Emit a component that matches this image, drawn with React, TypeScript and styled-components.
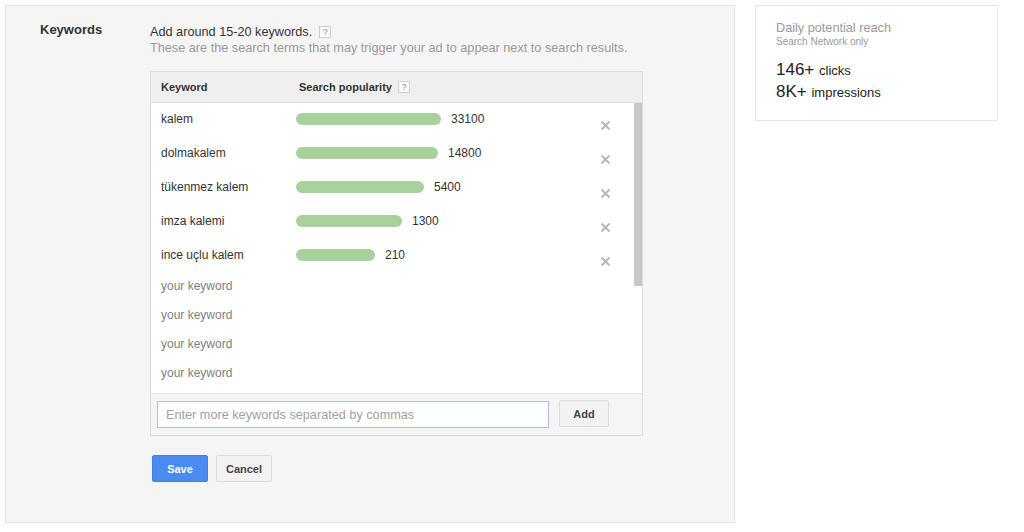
import styled, { createGlobalStyle } from 'styled-components';

const Global = createGlobalStyle`
  html, body {
    margin: 0;
    padding: 0;
    background: #fff;
    font-family: Arial, "Liberation Sans", sans-serif;
    color: #222;
  }
`;

const Page = styled.div`
  display: flex;
  align-items: flex-start;
  gap: 20px;
  padding: 5px;
`;

const Panel = styled.section`
  box-sizing: border-box;
  width: 730px;
  height: 518px;
  background: #f5f5f5;
  border: 1px solid #e3e3e3;
  display: flex;
  padding: 18px 0 0 34px;
`;

const Label = styled.div`
  width: 110px;
  flex: none;
  font-size: 13px;
  font-weight: bold;
  color: #333;
  line-height: 12px;
`;

const Content = styled.div`
  width: 493px;
`;

const Intro = styled.div`
  font-size: 12.7px;
  line-height: 16px;
  color: #333;
  display: flex;
  align-items: center;
  gap: 7px;
`;

const Sub = styled.div`
  font-size: 12.7px;
  line-height: 16px;
  color: #999;
  white-space: nowrap;
`;

const Help = styled.span`
  box-sizing: border-box;
  display: inline-flex;
  align-items: center;
  justify-content: center;
  width: 12px;
  height: 12px;
  border: 1px solid #ccc;
  background: #fff;
  color: #888;
  font-size: 9px;
  font-weight: normal;
  line-height: 1;
`;

const Table = styled.div`
  margin-top: 15px;
  border: 1px solid #dcdcdc;
  background: #fff;
`;

const Header = styled.div`
  display: flex;
  align-items: center;
  height: 30px;
  background: #efefef;
  border-bottom: 1px solid #e2e2e2;
  font-size: 11px;
  font-weight: bold;
  color: #333;
`;

const KeyCol = styled.div`
  box-sizing: border-box;
  width: 145px;
  padding-left: 10px;
  flex: none;
`;

const PopCol = styled.div`
  display: flex;
  align-items: center;
  gap: 6px;
  padding-left: 3px;
`;

const Body = styled.div`
  position: relative;
  box-sizing: border-box;
  height: 290px;
  padding-bottom: 4px;
`;

const Thumb = styled.div`
  position: absolute;
  top: 0;
  right: 0;
  width: 8px;
  height: 183px;
  background: #c8c8c8;
`;

const Row = styled.div`
  box-sizing: border-box;
  display: flex;
  align-items: center;
  height: 34px;
  padding-bottom: 2px;
  font-size: 12px;
  color: #333;
`;

const Bar = styled.div`
  height: 12px;
  border-radius: 6px;
  background: #a9d19b;
  flex: none;
`;

const Count = styled.span`
  margin-left: 10px;
`;

const Remove = styled.button`
  margin-left: auto;
  margin-right: 31px;
  margin-top: 12px;
  border: 0;
  background: none;
  padding: 0;
  width: 11px;
  height: 11px;
  display: flex;
  cursor: pointer;
`;

const Placeholder = styled.div`
  height: 29px;
  line-height: 27px;
  padding-left: 10px;
  font-size: 12px;
  color: #808080;
`;

const Footer = styled.div`
  display: flex;
  align-items: flex-start;
  gap: 10px;
  height: 42px;
  padding: 6px 0 0 6px;
  box-sizing: border-box;
  border-top: 1px solid #e2e2e2;
  background: #f5f5f5;
`;

const Input = styled.input`
  box-sizing: border-box;
  width: 392px;
  height: 27px;
  margin-top: 1px;
  border: 1px solid #a9bfe6;
  padding: 0 8px;
  font-size: 12.7px;
  font-family: inherit;
  color: #333;
  &::placeholder {
    color: #a0a0a0;
  }
  &:focus {
    outline: none;
  }
`;

const Button = styled.button<{ primary?: boolean; w?: number }>`
  box-sizing: border-box;
  height: 27px;
  padding: 0;
  width: ${(p) => p.w ?? 56}px;
  font-family: inherit;
  font-size: 11px;
  font-weight: bold;
  border-radius: 2px;
  cursor: pointer;
  background: ${(p) => (p.primary ? '#4a8bf0' : '#f2f2f2')};
  color: ${(p) => (p.primary ? '#fff' : '#444')};
  border: 1px solid ${(p) => (p.primary ? '#3f7fe6' : '#dcdcdc')};
`;

const Actions = styled.div`
  display: flex;
  gap: 8px;
  margin: 19px 0 0 2px;
`;

const Reach = styled.aside`
  box-sizing: border-box;
  width: 243px;
  height: 116px;
  border: 1px solid #e6e6e6;
  background: #fff;
  padding: 14px 20px;
`;

const ReachTitle = styled.div`
  font-size: 12.7px;
  line-height: 16px;
  color: #999;
`;

const ReachSub = styled.div`
  font-size: 10px;
  line-height: 12px;
  color: #999;
`;

const Stats = styled.div`
  margin-top: 11px;
`;

const Stat = styled.div`
  line-height: 21px;
  color: #222;
  font-size: 17px;
  span {
    font-size: 13px;
  }
`;

const keywords = [
  { name: 'kalem', count: 33100, width: 145 },
  { name: 'dolmakalem', count: 14800, width: 142 },
  { name: 'tükenmez kalem', count: 5400, width: 128 },
  { name: 'imza kalemi', count: 1300, width: 106 },
  { name: 'ince uçlu kalem', count: 210, width: 79 },
];

function XIcon() {
  return (
    <svg width="11" height="11" viewBox="0 0 11 11">
      <path d="M1.5 1.5l8 8M9.5 1.5l-8 8" stroke="#b5b5b5" strokeWidth="1.8" />
    </svg>
  );
}

export default function App() {
  return (
    <>
      <Global />
      <Page>
        <Panel>
          <Label>Keywords</Label>
          <Content>
            <Intro>
              Add around 15-20 keywords. <Help>?</Help>
            </Intro>
            <Sub>These are the search terms that may trigger your ad to appear next to search results.</Sub>
            <Table>
              <Header>
                <KeyCol>Keyword</KeyCol>
                <PopCol>
                  Search popularity <Help>?</Help>
                </PopCol>
              </Header>
              <Body>
                <Thumb />
                {keywords.map((k) => (
                  <Row key={k.name}>
                    <KeyCol>{k.name}</KeyCol>
                    <Bar style={{ width: k.width }} />
                    <Count>{k.count}</Count>
                    <Remove aria-label="Remove">
                      <XIcon />
                    </Remove>
                  </Row>
                ))}
                {Array.from({ length: 4 }).map((_, i) => (
                  <Placeholder key={i}>your keyword</Placeholder>
                ))}
              </Body>
              <Footer>
                <Input placeholder="Enter more keywords separated by commas" />
                <Button w={50}>Add</Button>
              </Footer>
            </Table>
            <Actions>
              <Button primary>Save</Button>
              <Button>Cancel</Button>
            </Actions>
          </Content>
        </Panel>
        <Reach>
          <ReachTitle>Daily potential reach</ReachTitle>
          <ReachSub>Search Network only</ReachSub>
          <Stats>
            <Stat>
              146+ <span>clicks</span>
            </Stat>
            <Stat>
              8K+ <span>impressions</span>
            </Stat>
          </Stats>
        </Reach>
      </Page>
    </>
  );
}
